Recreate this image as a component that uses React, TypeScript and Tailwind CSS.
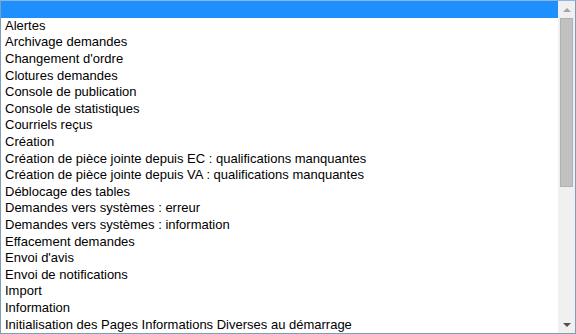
const items = [
  "",
  "Alertes",
  "Archivage demandes",
  "Changement d'ordre",
  "Clotures demandes",
  "Console de publication",
  "Console de statistiques",
  "Courriels reçus",
  "Création",
  "Création de pièce jointe depuis EC : qualifications manquantes",
  "Création de pièce jointe depuis VA : qualifications manquantes",
  "Déblocage des tables",
  "Demandes vers systèmes : erreur",
  "Demandes vers systèmes : information",
  "Effacement demandes",
  "Envoi d'avis",
  "Envoi de notifications",
  "Import",
  "Information",
  "Initialisation des Pages Informations Diverses au démarrage",
]

export default function App() {
  return (
    <div className="w-[576px] h-[334px] bg-white border border-[#7f9db9] border-t-[#8fb4e8] flex overflow-hidden font-['Liberation_Sans',Arial,sans-serif] text-[13px] text-black">
      {/* list */}
      <div className="flex-1 flex flex-col overflow-hidden">
        {items.map((label, i) => (
          <div
            key={i}
            className={`h-[16.6px] shrink-0 flex items-center pl-[4px] pb-px whitespace-nowrap leading-none ${i === 0 ? "bg-[#1e8fff] text-white" : ""}`}
          >
            {label}
          </div>
        ))}
      </div>

      {/* scrollbar */}
      <div className="w-[17px] bg-[#f0f0f0] flex flex-col items-center">
        <div className="h-[17px] flex items-center justify-center">
          <div className="w-0 h-0 border-l-[4px] border-r-[4px] border-b-[4px] border-l-transparent border-r-transparent border-b-[#a3a3a3]" />
        </div>
        <div className="w-[13px] h-[169px] bg-[#c1c1c1] border border-[#b0b0b0]" />
        <div className="flex-1" />
        <div className="h-[17px] flex items-center justify-center">
          <div className="w-0 h-0 border-l-[4px] border-r-[4px] border-t-[4px] border-l-transparent border-r-transparent border-t-[#505050]" />
        </div>
      </div>
    </div>
  )
}
